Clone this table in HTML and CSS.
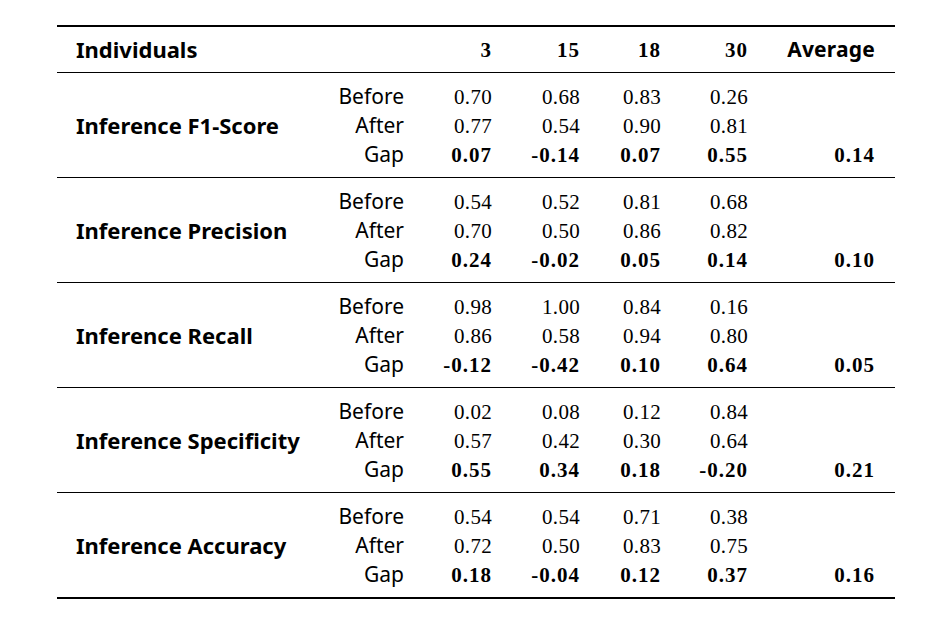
FILE: index.html
```html
<!DOCTYPE html>
<html lang="en">
<head>
<meta charset="utf-8">
<title>Inference results</title>
<link rel="stylesheet" href="styles.css">
</head>
<body>
<table class="results">
  <colgroup>
    <col class="c-name">
    <col class="c-sub">
    <col class="c-3">
    <col class="c-15">
    <col class="c-18">
    <col class="c-30">
    <col class="c-avg">
  </colgroup>
  <thead>
    <tr>
      <th class="name">Individuals</th>
      <th class="sub"></th>
      <th class="num">3</th>
      <th class="num">15</th>
      <th class="num">18</th>
      <th class="num">30</th>
      <th class="avg">Average</th>
    </tr>
  </thead>
  <tbody class="group">
    <tr class="first">
      <td class="name" rowspan="3">Inference F1-Score</td>
      <td class="sub">Before</td>
      <td class="num">0.70</td><td class="num">0.68</td><td class="num">0.83</td><td class="num">0.26</td><td class="num avgv"></td>
    </tr>
    <tr>
      <td class="sub">After</td>
      <td class="num">0.77</td><td class="num">0.54</td><td class="num">0.90</td><td class="num">0.81</td><td class="num avgv"></td>
    </tr>
    <tr class="last gap">
      <td class="sub">Gap</td>
      <td class="num">0.07</td><td class="num">-0.14</td><td class="num">0.07</td><td class="num">0.55</td><td class="num avgv">0.14</td>
    </tr>
  </tbody>
  <tbody class="group">
    <tr class="first">
      <td class="name" rowspan="3">Inference Precision</td>
      <td class="sub">Before</td>
      <td class="num">0.54</td><td class="num">0.52</td><td class="num">0.81</td><td class="num">0.68</td><td class="num avgv"></td>
    </tr>
    <tr>
      <td class="sub">After</td>
      <td class="num">0.70</td><td class="num">0.50</td><td class="num">0.86</td><td class="num">0.82</td><td class="num avgv"></td>
    </tr>
    <tr class="last gap">
      <td class="sub">Gap</td>
      <td class="num">0.24</td><td class="num">-0.02</td><td class="num">0.05</td><td class="num">0.14</td><td class="num avgv">0.10</td>
    </tr>
  </tbody>
  <tbody class="group">
    <tr class="first">
      <td class="name" rowspan="3">Inference Recall</td>
      <td class="sub">Before</td>
      <td class="num">0.98</td><td class="num">1.00</td><td class="num">0.84</td><td class="num">0.16</td><td class="num avgv"></td>
    </tr>
    <tr>
      <td class="sub">After</td>
      <td class="num">0.86</td><td class="num">0.58</td><td class="num">0.94</td><td class="num">0.80</td><td class="num avgv"></td>
    </tr>
    <tr class="last gap">
      <td class="sub">Gap</td>
      <td class="num">-0.12</td><td class="num">-0.42</td><td class="num">0.10</td><td class="num">0.64</td><td class="num avgv">0.05</td>
    </tr>
  </tbody>
  <tbody class="group">
    <tr class="first">
      <td class="name" rowspan="3">Inference Specificity</td>
      <td class="sub">Before</td>
      <td class="num">0.02</td><td class="num">0.08</td><td class="num">0.12</td><td class="num">0.84</td><td class="num avgv"></td>
    </tr>
    <tr>
      <td class="sub">After</td>
      <td class="num">0.57</td><td class="num">0.42</td><td class="num">0.30</td><td class="num">0.64</td><td class="num avgv"></td>
    </tr>
    <tr class="last gap">
      <td class="sub">Gap</td>
      <td class="num">0.55</td><td class="num">0.34</td><td class="num">0.18</td><td class="num">-0.20</td><td class="num avgv">0.21</td>
    </tr>
  </tbody>
  <tbody class="group">
    <tr class="first">
      <td class="name" rowspan="3">Inference Accuracy</td>
      <td class="sub">Before</td>
      <td class="num">0.54</td><td class="num">0.54</td><td class="num">0.71</td><td class="num">0.38</td><td class="num avgv"></td>
    </tr>
    <tr>
      <td class="sub">After</td>
      <td class="num">0.72</td><td class="num">0.50</td><td class="num">0.83</td><td class="num">0.75</td><td class="num avgv"></td>
    </tr>
    <tr class="last gap">
      <td class="sub">Gap</td>
      <td class="num">0.18</td><td class="num">-0.04</td><td class="num">0.12</td><td class="num">0.37</td><td class="num avgv">0.16</td>
    </tr>
  </tbody>
</table>
</body>
</html>
```

FILE: styles.css
```css
html, body {
  margin: 0;
  padding: 0;
  background: #ffffff;
}

body {
  color: #000000;
  font-family: "Liberation Serif", serif;
  font-size: 21px;
}

.results {
  margin: 25px 0 0 57px;
  width: 838px;
  table-layout: fixed;
  border-collapse: collapse;
  border-top: 2px solid #000;
  border-bottom: 2px solid #000;
  line-height: 29px;
}

.c-name { width: 273px; }
.c-sub { width: 74px; }
.c-3 { width: 88px; }
.c-15 { width: 88px; }
.c-18 { width: 81px; }
.c-30 { width: 87px; }
.c-avg { width: 147px; }

.results th,
.results td {
  padding: 0;
  height: 29px;
  white-space: nowrap;
  vertical-align: top;
}

.results thead th {
  padding-top: 9px;
  padding-bottom: 7px;
  border-bottom: 1px solid #000;
  font-weight: bold;
}

.results .name {
  text-align: left;
  padding-left: 19px;
  font-family: "Noto Sans", sans-serif;
  font-size: 22px;
  font-weight: bold;
  vertical-align: middle;
}

.results thead .name {
  vertical-align: top;
  line-height: 27px;
}

.results .sub {
  text-align: right;
  font-family: "Noto Sans", sans-serif;
}

.results td.sub {
  line-height: 27px;
}

.results .num {
  text-align: right;
  letter-spacing: 0.3px;
}

.results .avg,
.results .avgv {
  text-align: right;
  padding-right: 20px;
}

.results th.avg {
  font-family: "Noto Sans", sans-serif;
  line-height: 27px;
  letter-spacing: 0.2px;
}

.group {
  border-top: 1px solid #000;
}

.group .first td {
  padding-top: 10px;
}

.group .first td.name {
  padding-top: 5px;
  padding-bottom: 5px;
}

.group .last td {
  padding-bottom: 7px;
}

.gap .num,
.results thead .num {
  font-weight: bold;
  letter-spacing: 1px;
}
```
